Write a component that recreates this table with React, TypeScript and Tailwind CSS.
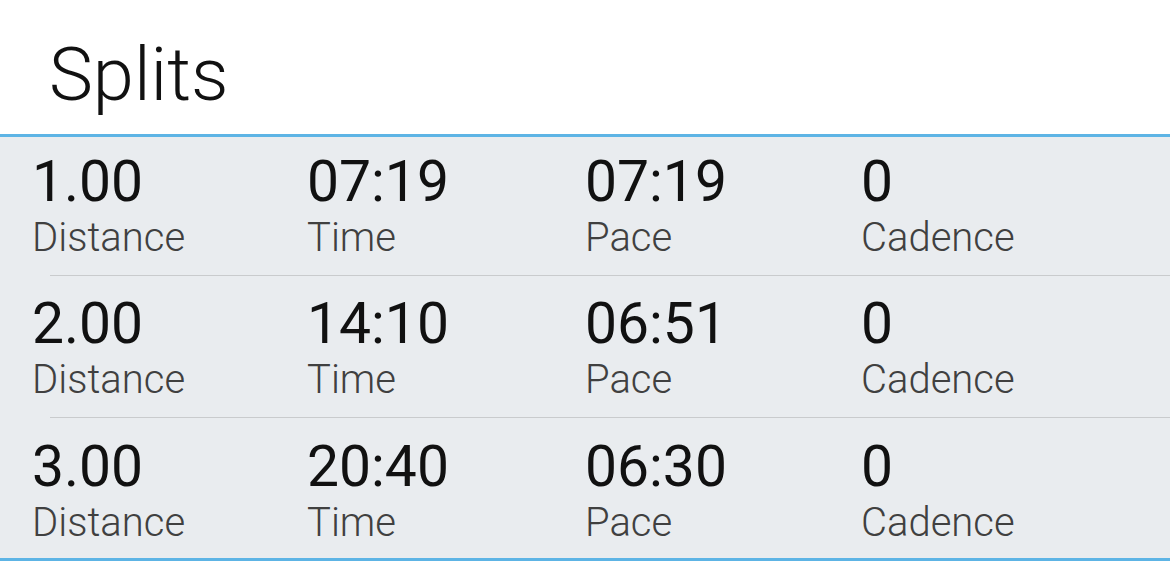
const splits = [
  { distance: "1.00", time: "07:19", pace: "07:19", cadence: "0", rowClass: "h-[138px] pt-[16px]" },
  { distance: "2.00", time: "14:10", pace: "06:51", cadence: "0", rowClass: "h-[141px] pt-[19px]" },
  { distance: "3.00", time: "20:40", pace: "06:30", cadence: "0", rowClass: "h-[140px] pt-[20px]" },
];

function Stat({ value, label }: { value: string; label: string }) {
  return (
    <div className="flex flex-col">
      <span className="text-[57px] leading-none font-normal text-[#111111]">{value}</span>
      <span className="mt-[8px] text-[40px] leading-none font-light text-[#404040]">{label}</span>
    </div>
  );
}

export default function App() {
  return (
    <div
      className="w-[1170px] h-[577px] bg-white overflow-hidden"
      style={{ fontFamily: "Roboto, 'Liberation Sans', sans-serif" }}
    >
      {/* Header */}
      <div className="h-[134px] pl-[49px] pt-[38px]">
        <h1 className="text-[74px] leading-none font-light text-[#111111]">Splits</h1>
      </div>

      {/* Splits list */}
      <div className="border-t-[3px] border-b-[3px] border-[#5db4e5] bg-[#e9ecef]">
        {splits.map((split, index) => (
          <div key={index}>
            <div className={`pl-[32px] grid grid-cols-[275px_278px_276px_1fr] ${split.rowClass}`}>
              <Stat value={split.distance} label="Distance" />
              <Stat value={split.time} label="Time" />
              <Stat value={split.pace} label="Pace" />
              <Stat value={split.cadence} label="Cadence" />
            </div>
            {index < splits.length - 1 && (
              <div className="ml-[50px] h-px bg-[#c9cbcd]" />
            )}
          </div>
        ))}
      </div>
    </div>
  );
}
